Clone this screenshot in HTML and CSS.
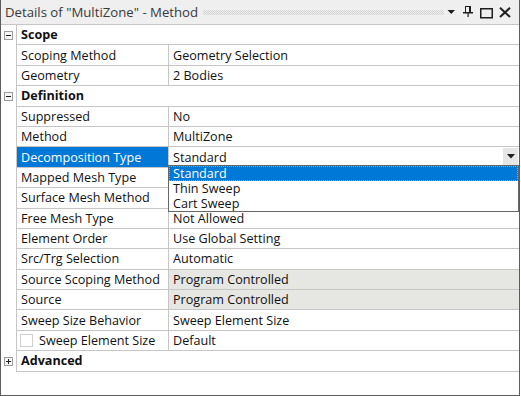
FILE: index.html
```html
<!DOCTYPE html>
<html>
<head>
<meta charset="utf-8">
<link rel="stylesheet" href="styles.css">
</head>
<body>
<div class="panel">
  <div class="titlebar">
    <span class="title">Details of "MultiZone" - Method</span>
    <span class="grip"></span>
    <svg class="tb-icons" width="72" height="24" viewBox="447 0 72 24">
      <polygon points="447.5,10 455,10 451.25,14" fill="#1e1e1e"/>
      <rect x="465.5" y="6.5" width="5" height="6" fill="none" stroke="#1e1e1e" stroke-width="1"/>
      <rect x="469" y="6" width="2" height="7" fill="#1e1e1e"/>
      <rect x="463" y="12" width="10" height="1.5" fill="#1e1e1e"/>
      <rect x="467.5" y="13" width="1.2" height="4" fill="#1e1e1e"/>
      <rect x="480.75" y="8.75" width="11.5" height="9" fill="none" stroke="#1e1e1e" stroke-width="1.5"/>
      <path d="M500 7.8 L510 17 M510 7.8 L500 17" stroke="#1e1e1e" stroke-width="2"/>
    </svg>
  </div>
  <div class="grid">
    <div class="row">
      <span class="gutter"><span class="toggle minus"></span></span>
      <span class="cat">Scope</span>
    </div>
    <div class="row">
      <span class="gutter"></span>
      <span class="label">Scoping Method</span>
      <span class="value">Geometry Selection</span>
    </div>
    <div class="row">
      <span class="gutter"></span>
      <span class="label">Geometry</span>
      <span class="value">2 Bodies</span>
    </div>
    <div class="row">
      <span class="gutter"><span class="toggle minus"></span></span>
      <span class="cat">Definition</span>
    </div>
    <div class="row">
      <span class="gutter"></span>
      <span class="label">Suppressed</span>
      <span class="value">No</span>
    </div>
    <div class="row">
      <span class="gutter"></span>
      <span class="label">Method</span>
      <span class="value">MultiZone</span>
    </div>
    <div class="row">
      <span class="gutter"></span>
      <span class="label selected">Decomposition Type</span>
      <span class="value combo">Standard<span class="combo-btn"><svg width="8" height="5" viewBox="0 0 8 5"><polygon points="0,0 8,0 4,4.5" fill="#1e1e1e"/></svg></span></span>
    </div>
    <div class="row">
      <span class="gutter"></span>
      <span class="label">Mapped Mesh Type</span>
      <span class="value"></span>
    </div>
    <div class="row">
      <span class="gutter"></span>
      <span class="label">Surface Mesh Method</span>
      <span class="value"></span>
    </div>
    <div class="row">
      <span class="gutter"></span>
      <span class="label">Free Mesh Type</span>
      <span class="value">Not Allowed</span>
    </div>
    <div class="row">
      <span class="gutter"></span>
      <span class="label">Element Order</span>
      <span class="value">Use Global Setting</span>
    </div>
    <div class="row">
      <span class="gutter"></span>
      <span class="label">Src/Trg Selection</span>
      <span class="value">Automatic</span>
    </div>
    <div class="row">
      <span class="gutter"></span>
      <span class="label">Source Scoping Method</span>
      <span class="value readonly">Program Controlled</span>
    </div>
    <div class="row">
      <span class="gutter"></span>
      <span class="label">Source</span>
      <span class="value readonly">Program Controlled</span>
    </div>
    <div class="row">
      <span class="gutter"></span>
      <span class="label">Sweep Size Behavior</span>
      <span class="value">Sweep Element Size</span>
    </div>
    <div class="row">
      <span class="gutter"></span>
      <span class="label check-label"><span class="checkbox"></span>Sweep Element Size</span>
      <span class="value">Default</span>
    </div>
    <div class="row">
      <span class="gutter"><span class="toggle plus"></span></span>
      <span class="cat">Advanced</span>
    </div>
  </div>
  <div class="dropdown">
    <div class="item current">Standard</div>
    <div class="item">Thin Sweep</div>
    <div class="item">Cart Sweep</div>
  </div>
</div>
</body>
</html>
```
FILE: styles.css
```css
html, body {
  margin: 0;
  padding: 0;
  background: #ffffff;
}

body {
  font-family: "Open Sans", "Noto Sans", "DejaVu Sans", sans-serif;
  font-size: 12.6px;
  color: #111111;
}

.panel {
  position: relative;
  width: 520px;
  height: 396px;
  box-sizing: border-box;
  border: 1px solid #5c5c5c;
  border-top: none;
  background: #ffffff;
  display: flex;
  flex-direction: column;
}

.titlebar {
  height: 24px;
  flex: none;
  display: flex;
  align-items: center;
  background: #efefef;
  border-bottom: 1px solid #c6c6c6;
  padding-left: 4px;
}

.title {
  font-size: 13.2px;
  color: #3a3a3a;
  white-space: nowrap;
}

.grip {
  flex: 1;
  height: 5px;
  margin: 1px 3px 0 5px;
  background-image:
    linear-gradient(45deg, #d2d2d2 25%, transparent 25%, transparent 75%, #d2d2d2 75%),
    linear-gradient(45deg, #d2d2d2 25%, transparent 25%, transparent 75%, #d2d2d2 75%);
  background-size: 2px 2px;
  background-position: 0 0, 1px 1px;
}

.tb-icons {
  flex: none;
  display: block;
}

.grid {
  flex: none;
  display: flex;
  flex-direction: column;
}

.row {
  display: flex;
  height: 20.4px;
}

.gutter {
  flex: none;
  width: 15px;
  border-right: 1px solid #c6c6c6;
  display: flex;
  align-items: center;
  justify-content: center;
}

.toggle {
  position: relative;
  width: 7px;
  height: 7px;
  border: 1px solid #9c9c9c;
  background: #f6f6f6;
}

.toggle::before {
  content: "";
  position: absolute;
  left: 1px;
  top: 3px;
  width: 5px;
  height: 1px;
  background: #1e1e1e;
}

.toggle.plus::after {
  content: "";
  position: absolute;
  left: 3px;
  top: 1px;
  width: 1px;
  height: 5px;
  background: #1e1e1e;
}

.cat,
.label,
.value {
  box-sizing: border-box;
  height: 100%;
  border-bottom: 1px solid #c6c6c6;
  display: flex;
  align-items: center;
  padding-left: 4px;
  white-space: nowrap;
}

.cat {
  flex: 1;
  font-weight: bold;
}

.label {
  flex: none;
  width: 152px;
  border-right: 1px solid #c6c6c6;
}

.label.selected {
  background: #0078d7;
  color: #ffffff;
}

.check-label {
  padding-left: 3px;
}

.checkbox {
  flex: none;
  width: 11px;
  height: 11px;
  border: 1px solid #cfcfcf;
  background: #ffffff;
  margin-right: 6px;
}

.value {
  flex: 1;
  min-width: 0;
}

.value.readonly {
  background: #e6e6e3;
}

.combo {
  position: relative;
}

.combo-btn {
  position: absolute;
  right: 1px;
  top: 1px;
  width: 15px;
  height: 17px;
  background: #e6e6e6;
  display: flex;
  align-items: center;
  justify-content: center;
}

.combo-btn svg {
  display: block;
}

.dropdown {
  position: absolute;
  left: 167px;
  top: 165px;
  width: 351px;
  box-sizing: border-box;
  border: 1px solid #666666;
  background: #ffffff;
}

.item {
  height: 15px;
  line-height: 15px;
  padding-left: 4px;
  white-space: nowrap;
}

.item.current {
  box-sizing: border-box;
  padding-left: 3px;
  background: #0078d7;
  color: #ffffff;
  border: 1px dotted #e59a3c;
  line-height: 13px;
}
```
